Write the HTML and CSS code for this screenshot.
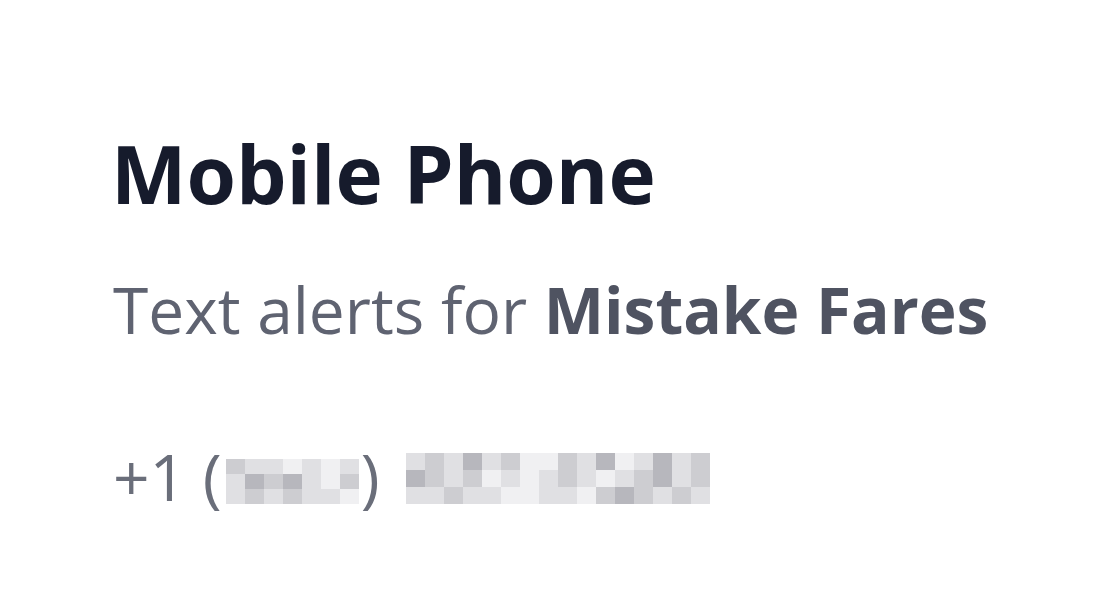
FILE: index.html
```html
<!DOCTYPE html>
<html lang="en">
<head>
    <meta charset="UTF-8">
    <meta name="viewport" content="width=device-width, initial-scale=1.0">
    <title>Mobile Phone</title>
    <link rel="stylesheet" href="styles.css">
</head>
<body>

    <div class="card">
        <h2 class="title">Mobile Phone</h2>
        <p class="subtitle">Text alerts for <strong>Mistake Fares</strong></p>

        <!-- number is masked, only the country code shows -->
        <p class="phone">
            <span>+1 (</span><span class="mosaic area">
                <i class="s2"></i><i class="s1"></i><i class="s1"></i><i class="s0"></i><i class="s1"></i><i class="s0"></i><i class="s1"></i>
                <i class="s1"></i><i class="s3"></i><i class="s2"></i><i class="s3"></i><i class="s1"></i><i class="s0"></i><i class="s2"></i>
                <i class="s1"></i><i class="s2"></i><i class="s1"></i><i class="s2"></i><i class="s1"></i><i class="s1"></i><i class="s0"></i>
            </span><span>)</span>
            <span class="mosaic number">
                <i class="s1"></i><i class="s2"></i><i class="s1"></i><i class="s3"></i><i class="s1"></i><i class="s2"></i><i class="s0"></i><i class="s0"></i><i class="s2"></i><i class="s1"></i><i class="s3"></i><i class="s0"></i><i class="s1"></i><i class="s3"></i><i class="s1"></i><i class="s2"></i>
                <i class="s3"></i><i class="s2"></i><i class="s1"></i><i class="s2"></i><i class="s0"></i><i class="s1"></i><i class="s0"></i><i class="s1"></i><i class="s2"></i><i class="s1"></i><i class="s0"></i><i class="s1"></i><i class="s2"></i><i class="s3"></i><i class="s1"></i><i class="s2"></i>
                <i class="s1"></i><i class="s1"></i><i class="s2"></i><i class="s1"></i><i class="s1"></i><i class="s0"></i><i class="s0"></i><i class="s1"></i><i class="s1"></i><i class="s0"></i><i class="s2"></i><i class="s3"></i><i class="s2"></i><i class="s1"></i><i class="s2"></i><i class="s1"></i>
            </span>
        </p>
    </div>

</body>
</html>
```

FILE: styles.css
```css
body {
    font-family: "Open Sans", "Noto Sans", sans-serif;
    background-color: #ffffff;
    margin: 0;
    padding: 0;
}
.card {
    padding: 118px 0 0 111px;
}
.title {
    font-size: 80px;
    font-weight: 700;
    color: #161b2c;
    line-height: 110px;
    margin: 0;
}
.subtitle {
    font-size: 64px;
    color: #5f6371;
    line-height: 90px;
    margin: 37px 0 0 2px;
}
.subtitle strong {
    color: #4f5361;
    font-weight: 700;
}
.phone {
    display: flex;
    align-items: center;
    font-size: 64px;
    color: #6a6e7a;
    line-height: 90px;
    margin: 77px 0 0 2px;
}
.mosaic {
    display: inline-grid;
}
.mosaic i {
    display: block;
}
.area {
    grid-template-columns: repeat(7, 19px);
    grid-auto-rows: 15px;
    margin: 8px 2px 0 4px;
}
.number {
    grid-template-columns: repeat(16, 19px);
    grid-auto-rows: 17px;
    margin: 2px 0 0 26px;
}
.s0 { background: #f0f0f2; }
.s1 { background: #e0e0e3; }
.s2 { background: #cdcdd1; }
.s3 { background: #b7b7bd; }
```
